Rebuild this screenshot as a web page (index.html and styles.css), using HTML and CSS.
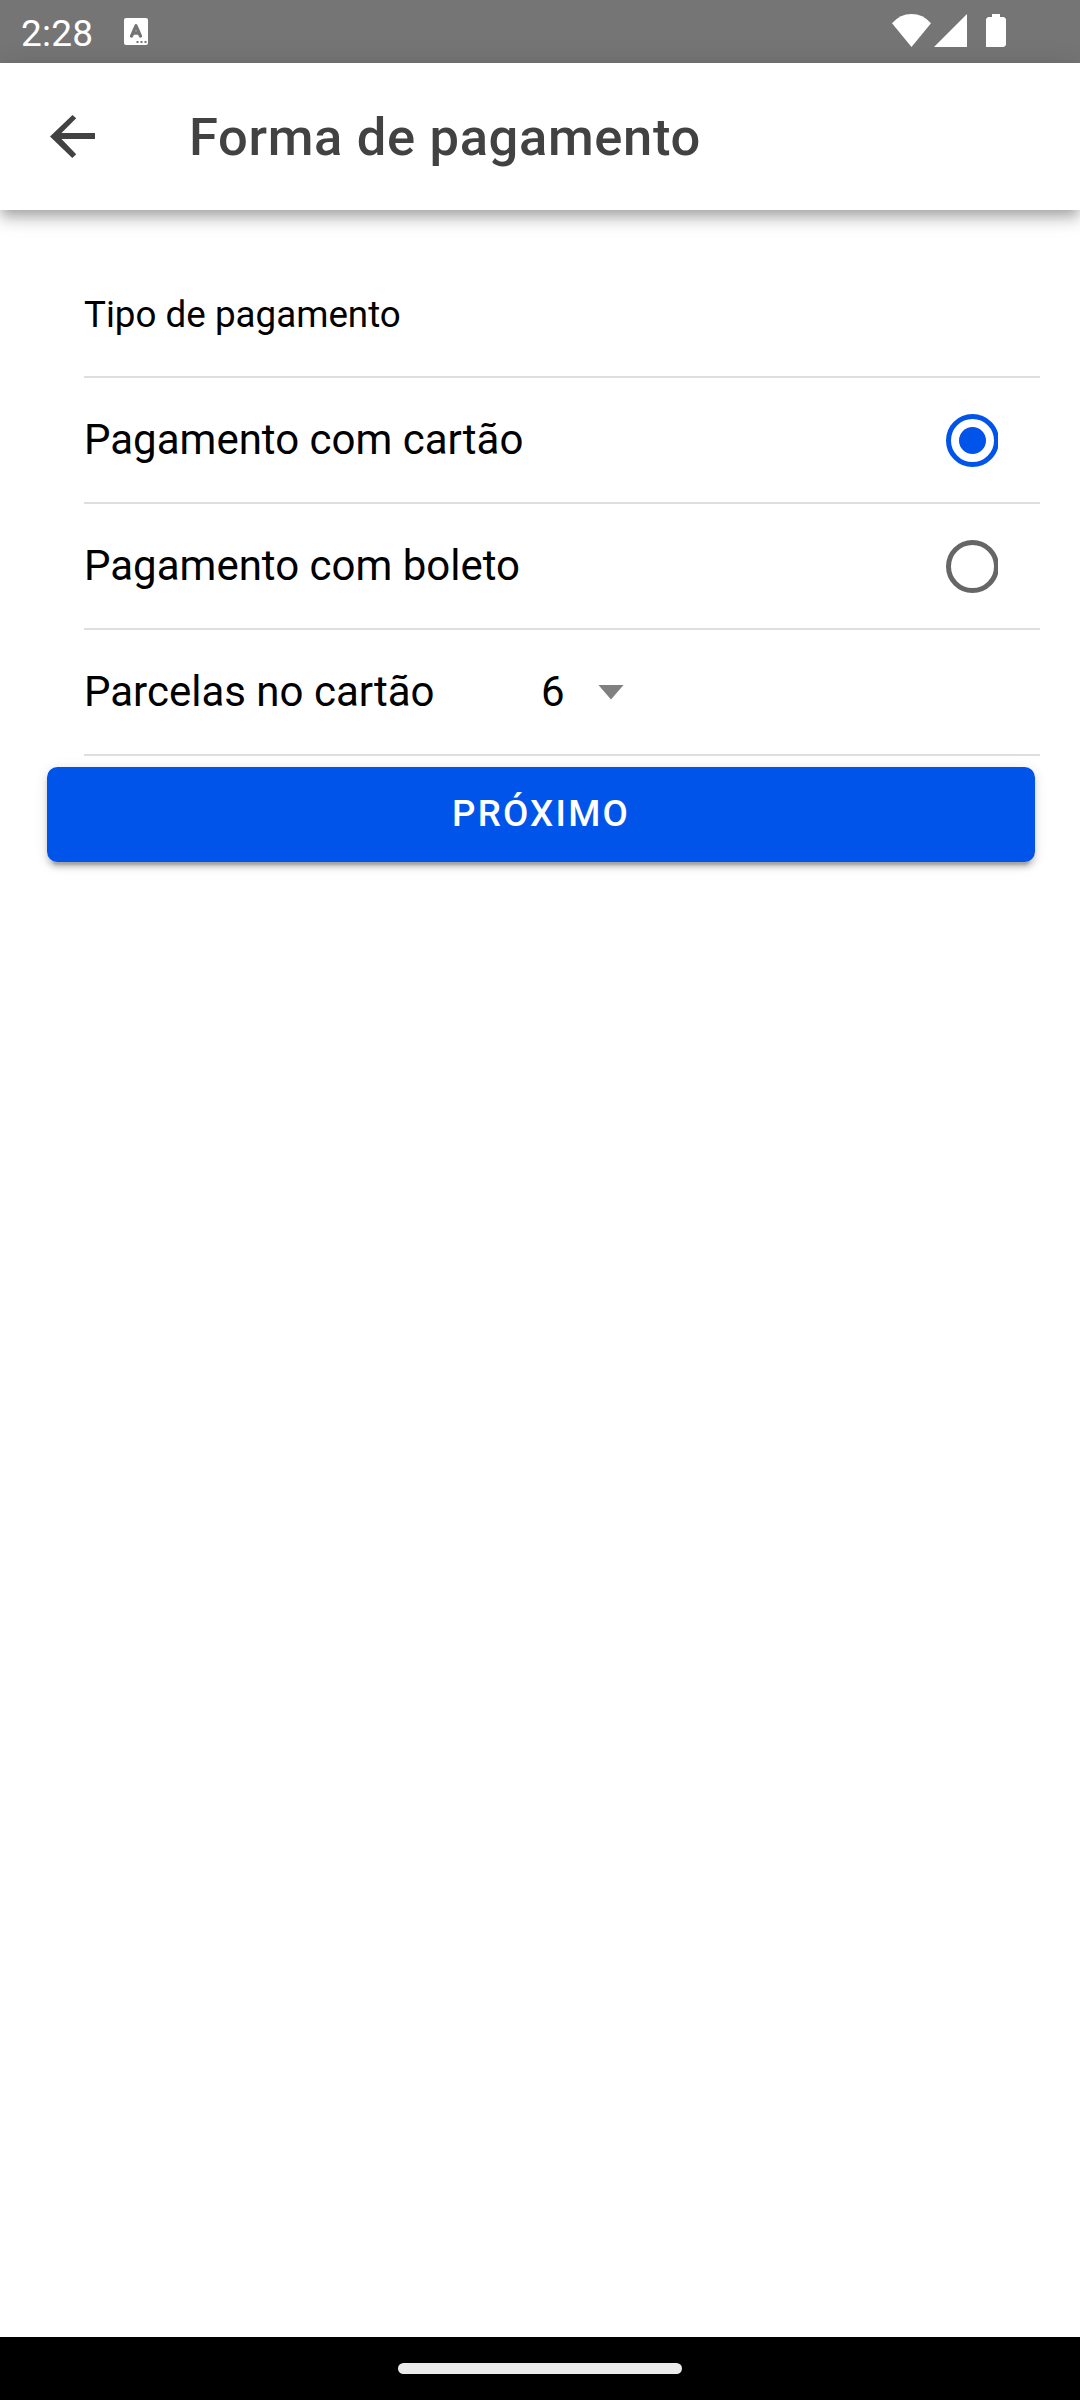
FILE: index.html
```html
<!DOCTYPE html>
<html lang="pt-BR">
<head>
<meta charset="utf-8">
<title>Forma de pagamento</title>
<link rel="stylesheet" href="styles.css">
</head>
<body>
<div class="screen">
  <div class="status">
    <span class="time">2:28</span>
    <svg class="keyboard" width="24" height="27" viewBox="0 0 24 27">
      <rect width="24" height="27" rx="2" fill="#fff"/>
      <path d="M7.500 18.100L12 7.800l4.500 10.300M9 15h6" fill="none" stroke="#757575" stroke-width="3.300" stroke-linecap="round" stroke-linejoin="round"/>
      <path d="M12.500 23h2v2h-2zM16.500 23h2v2h-2zM20.500 23h2v2h-2z" fill="#757575"/>
    </svg>
    <svg class="signals" width="114" height="34" viewBox="0 0 114 34" fill="#fff">
      <path d="M0 9.300Q8 0 19.500 0T39 9.300L19.500 33z"/>
      <path d="M42 33L75 0v33z"/>
      <path d="M100 0h8v3h4l2 2v26l-2 2H94V5l2-2h4z"/>
    </svg>
  </div>
  <header class="header">
    <svg class="back" width="46" height="44" viewBox="0 0 46 44">
      <path d="M0 21.500L22.500 0l3.700 3.300L11.500 18H45v6H11.500l14.700 15.300-3.900 3.700z" fill="#424242"/>
    </svg>
    <h1 class="title">Forma de pagamento</h1>
  </header>
  <main class="content">
    <div class="row list-header">Tipo de pagamento</div>
    <div class="row"><span>Pagamento com cartão</span><span class="radio-clip"><span class="radio checked"></span></span></div>
    <div class="row"><span>Pagamento com boleto</span><span class="radio-clip"><span class="radio"></span></span></div>
    <div class="row"><span class="select-label">Parcelas no cartão</span><span class="value">6</span><span class="caret"></span></div>
    <button class="next">PRÓXIMO</button>
  </main>
  <div class="nav"><span class="handle"></span></div>
</div>
</body>
</html>
```
FILE: styles.css
```css
* { box-sizing: border-box; }
body { margin: 0; background: #fff; font-family: Roboto, sans-serif; color: #000; }
.screen { width: 1080px; height: 2400px; display: flex; flex-direction: column; }
.status { height: 63px; flex: none; display: flex; align-items: flex-start; background: #757575; color: #fff; padding-right: 74px; }
.time { width: 124px; padding-left: 21px; font-size: 37px; line-height: 43px; padding-top: 12px; letter-spacing: .2px; }
.keyboard { margin-top: 18px; }
.signals { margin: 14px 0 0 auto; }
.header { position: relative; height: 147px; flex: none; display: flex; align-items: center; padding-left: 50px; background: #fff; box-shadow: 0 5.25px 10.5px -2.6px rgba(0,0,0,.2), 0 10.5px 13px 0 rgba(0,0,0,.14), 0 2.6px 26px 0 rgba(0,0,0,.12); }
.back { flex: none; }
.title { margin: 0 0 0 93px; font-size: 52.5px; line-height: 62px; font-weight: 500; letter-spacing: .0125em; color: #424242; }
.content { flex: 1; padding-top: 42px; }
.row { height: 126px; margin: 0 40px 0 84px; border-bottom: 2px solid #dedede; display: flex; align-items: center; font-size: 42px; line-height: 50px; }
.list-header { font-size: 36.75px; padding-top: 2px; }
.radio-clip { width: 52px; height: 53px; overflow: hidden; margin: 0 42px 0 auto; }
.radio { width: 53px; height: 53px; border: 5.25px solid #666; border-radius: 50%; display: flex; align-items: center; justify-content: center; }
.checked { border-color: #0054e9; }
.checked::before { content: ""; width: 27px; height: 27px; border-radius: 50%; background: #0054e9; }
.select-label { width: 457px; }
.value { width: 57px; }
.caret { width: 26px; height: 15px; background: #808080; clip-path: polygon(0 0, 100% 0, 50% 100%); }
.next { display: block; width: 988px; height: 95px; margin: 11px 0 0 47px; padding: 0 0 2px; border: 0; border-radius: 10.5px; background: #0054e9; color: #fff; font: 500 36.75px/43px Roboto, sans-serif; letter-spacing: .06em; box-shadow: 0 7.9px 2.6px -5.25px rgba(0,0,0,.2), 0 5.25px 5.25px 0 rgba(0,0,0,.14), 0 2.6px 13px 0 rgba(0,0,0,.12); }
.nav { height: 63px; flex: none; background: #000; display: flex; justify-content: center; padding-top: 26px; }
.handle { width: 284px; height: 11px; border-radius: 6px; background: #ebebeb; }
```
